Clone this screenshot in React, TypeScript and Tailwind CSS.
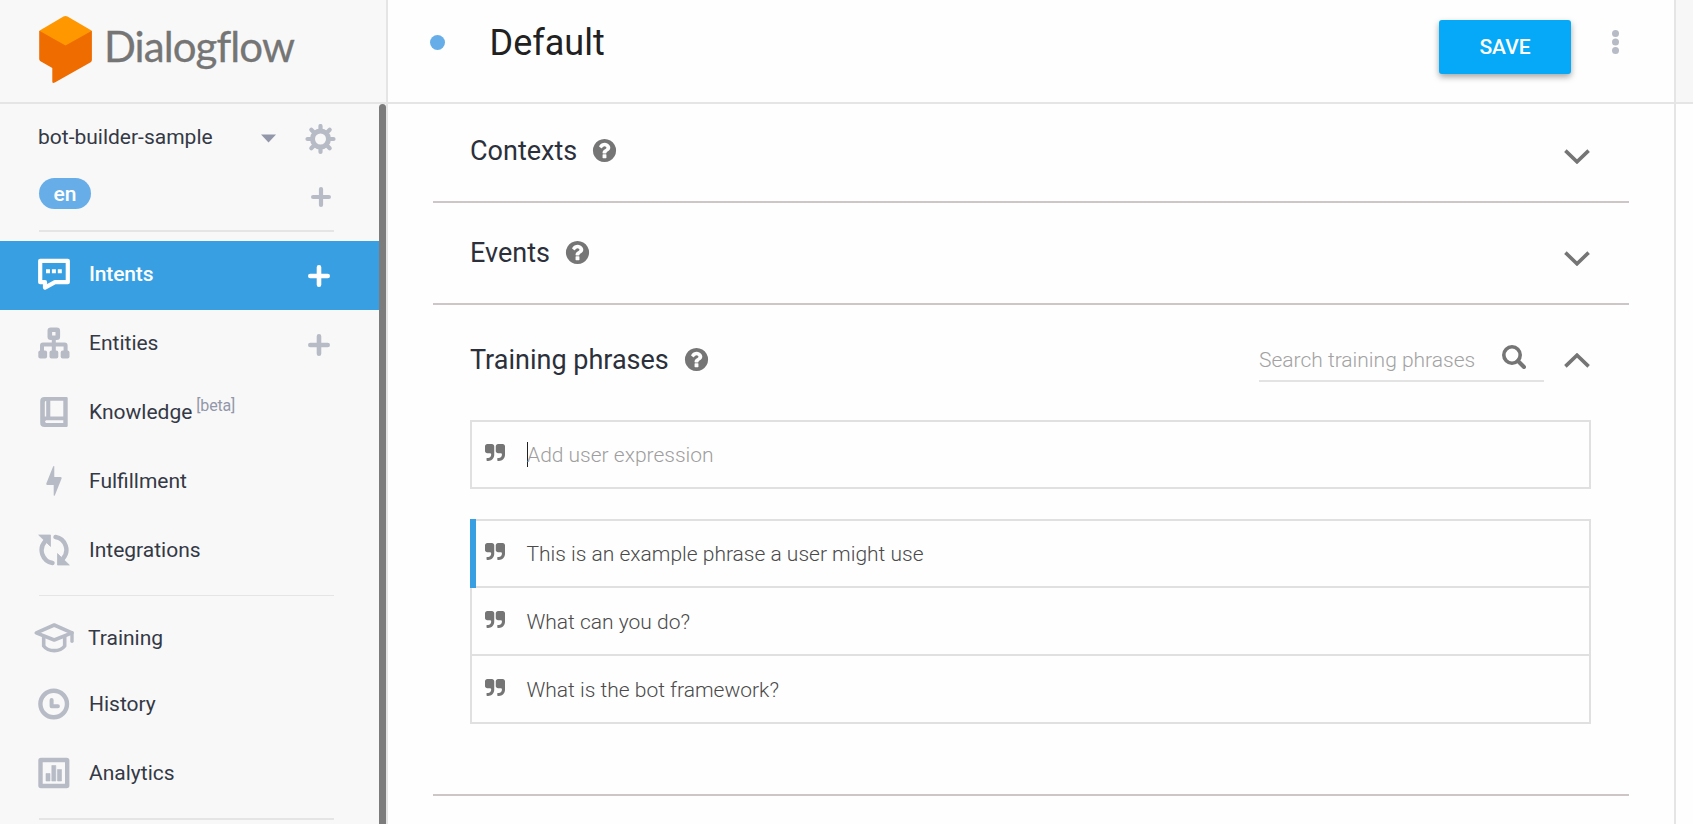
import type { ReactNode } from "react";

function Svg({ w, h, box, className = "", children }: { w: number; h: number; box?: string; className?: string; children: ReactNode }) {
  return (
    <svg width={w} height={h} viewBox={box ?? `0 0 ${w} ${h}`} fill="none" className={`block shrink-0 ${className}`}>
      {children}
    </svg>
  );
}

function HelpIcon() {
  return (
    <Svg w={27} h={27} box="0 0 1792 1792" className="text-[#757575]">
      <path
        fill="currentColor"
        d="M1024 1376v-192q0-14-9-23t-23-9h-192q-14 0-23 9t-9 23v192q0 14 9 23t23 9h192q14 0 23-9t9-23zm256-672q0-88-55.5-163t-138.5-116-170-41q-243 0-371 213-15 24 8 42l132 100q7 6 19 6 16 0 25-12 53-68 86-92 34-24 86-24 48 0 85.5 26t37.5 59q0 38-20 61t-68 45q-63 28-115.5 86.5t-52.5 125.5v36q0 14 9 23t23 9h192q14 0 23-9t9-23q0-19 21.5-49.5t54.5-49.5q32-18 49-28.5t46-35 44.5-48 28-60.5 12.5-81zm384 192q0 209-103 385.5t-279.5 279.5-385.5 103-385.5-103-279.5-279.5-103-385.5 103-385.5 279.5-279.5 385.5-103 385.5 103 279.5 279.5 103 385.5z"
      />
    </Svg>
  );
}

function QuoteIcon() {
  return (
    <Svg w={20} h={17} box="64 128 1664 1408" className="text-[#757575]">
      <path
        fill="currentColor"
        d="M832 320v704q0 104-40.5 198.5t-109.5 163.5-163.5 109.5-198.5 40.5h-64q-26 0-45-19t-19-45v-128q0-26 19-45t45-19h64q106 0 181-75t75-181v-32q0-40-28-68t-68-28h-224q-80 0-136-56t-56-136v-384q0-80 56-136t136-56h384q80 0 136 56t56 136zm896 0v704q0 104-40.5 198.5t-109.5 163.5-163.5 109.5-198.5 40.5h-64q-26 0-45-19t-19-45v-128q0-26 19-45t45-19h64q106 0 181-75t75-181v-32q0-40-28-68t-68-28h-224q-80 0-136-56t-56-136v-384q0-80 56-136t136-56h384q80 0 136 56t56 136z"
      />
    </Svg>
  );
}

function Chevron({ up = false }: { up?: boolean }) {
  return (
    <Svg w={26} h={15} className="text-[#757575]">
      <path d={up ? "M1.4 13.4 13 2.2 24.6 13.4" : "M1.4 1.6 13 12.8 24.6 1.6"} stroke="currentColor" strokeWidth="3.6" />
    </Svg>
  );
}

function Plus({ size }: { size: number }) {
  return (
    <Svg w={size} h={size} box="0 0 22 22">
      <path d="M11 2.300v17.400M2.300 11h17.400" stroke="currentColor" strokeWidth="4.600" strokeLinecap="round" />
    </Svg>
  );
}

function Gear() {
  const angles = [0, 45, 90, 135, 180, 225, 270, 315];
  return (
    <Svg w={31} h={31} className="text-[#b7bbc5]">
      <circle cx="15.5" cy="15" r="8" stroke="currentColor" strokeWidth="5" />
      {angles.map((a) => (
        <path key={a} d="M15.5 5.500V2" stroke="currentColor" strokeWidth="4.200" strokeLinecap="round" transform={`rotate(${a} 15.5 15)`} />
      ))}
    </Svg>
  );
}

const icons: Record<string, ReactNode> = {
  intents: (
    <Svg w={32} h={32}>
      <path d="M2.2 2.8h27.600v21.400H17L7 29.600v-5.400H2.200z" stroke="currentColor" strokeWidth="4.200" strokeLinejoin="round" />
      <path d="M8 11.200h4v4H8zM13.900 11.200h4v4h-4zM19.800 11.200h4v4h-4z" fill="currentColor" />
    </Svg>
  ),
  entities: (
    <Svg w={32} h={32}>
      <rect x="11.8" y="2.8" width="8" height="8" rx="1" stroke="currentColor" strokeWidth="4.600" />
      <path d="M15.8 12v12M4 25v-6.600q0-1 1-1h21.600q1 0 1 1V25" stroke="currentColor" strokeWidth="4" />
      <rect x=".3" y="23.400" width="8.800" height="8" rx="2" fill="currentColor" />
      <rect x="11.500" y="23.400" width="8.800" height="8" rx="2" fill="currentColor" />
      <rect x="22.700" y="23.400" width="8.800" height="8" rx="2" fill="currentColor" />
    </Svg>
  ),
  knowledge: (
    <Svg w={32} h={32}>
      <path
        fill="currentColor"
        fillRule="evenodd"
        d="M6.5 1h22q1.2 0 1.2 1.2v27.6q0 1.2-1.2 1.2h-22Q2.2 31 2.2 26.700V5.300Q2.200 1 6.500 1zM12.300 4.800v15.600H25.300V4.800zM8.200 4.800Q6.800 4.800 6.800 6.300v14.100H8.200V4.800zM8.200 24.200q-2.400 1.400 0 2.800H25.300v-2.800z"
      />
    </Svg>
  ),
  fulfillment: (
    <Svg w={32} h={32}>
      <path d="M16.300 1.200v10.900h6.400q1.300.1.900 1.500L16.900 30.200q-.8 1.200-1.200 0V19.900H9.200q-1.300-.1-.9-1.500L15 1.800q.6-1.100 1.300-.6z" fill="currentColor" />
    </Svg>
  ),
  integrations: (
    <Svg w={32} h={32}>
      <path d="M17.500 3A13 13 0 0 1 25 24.500M14.500 29A13 13 0 0 1 7 7.500" stroke="currentColor" strokeWidth="4.400" strokeLinecap="round" />
      <path d="M.7 1h11.800v11.400zM31.300 31H19.500V19.600z" fill="currentColor" stroke="currentColor" strokeWidth=".8" strokeLinejoin="round" />
    </Svg>
  ),
  training: (
    <Svg w={40} h={32} className="-mx-1">
      <path d="M2.300 11.800 20.200 4 38 11.800 20.200 19z" stroke="currentColor" strokeWidth="3.600" strokeLinejoin="round" />
      <path d="M9.700 15v10q3.500 4.600 10.500 4.600T30.700 25V15" stroke="currentColor" strokeWidth="3.600" strokeLinejoin="round" />
      <path d="M38 11.800v8.500" stroke="currentColor" strokeWidth="3.400" strokeLinecap="round" />
    </Svg>
  ),
  history: (
    <Svg w={32} h={32}>
      <circle cx="15.700" cy="16" r="13.300" stroke="currentColor" strokeWidth="4.400" />
      <path d="M13.600 12v6.300h6.300" stroke="currentColor" strokeWidth="4" strokeLinecap="round" strokeLinejoin="round" />
    </Svg>
  ),
  analytics: (
    <Svg w={32} h={32}>
      <rect x="2.500" y="3" width="26.700" height="26" rx=".5" stroke="currentColor" strokeWidth="4.400" />
      <path d="M8 16.500h4V24H8zM13.800 8.500h4V24h-4zM19.500 12.500h4V24h-4z" fill="currentColor" stroke="currentColor" strokeWidth=".6" strokeLinejoin="round" />
    </Svg>
  ),
};

function NavItem({ icon, label, height, active, plus, beta, textClass = "" }: { icon: string; label: string; height: string; active?: boolean; plus?: boolean; beta?: boolean; textClass?: string }) {
  return (
    <a className={`flex w-[379px] items-center pl-[38px] ${height} ${active ? "bg-[#38a0e2] font-medium tracking-[-0.15px] text-white" : "text-[#343946]"}`}>
      <span className={`pb-[3px] ${active ? "text-white" : "text-[#b7bbc5]"}`}>{icons[icon]}</span>
      <span className={`ml-[19px] flex-1 pb-[3px] text-[21px] leading-6 ${textClass}`}>
        {label}
        {beta && <span className="relative -top-[8px] ml-[4px] text-[16px] leading-none tracking-[-0.2px] text-[#9297aa]">[beta]</span>}
      </span>
      {plus && (
        <span className={`mt-[1px] mr-[49px] ${active ? "text-white" : "text-[#b7bbc5]"}`}>
          <Plus size={22} />
        </span>
      )}
    </a>
  );
}

function Sidebar() {
  return (
    <aside className="flex h-[824px] w-[388px] shrink-0 flex-col border-r-2 border-[#e5e5e5] bg-[#f8f8f8]">
      <div className="flex h-[104px] shrink-0 items-start border-b-2 border-[#e5e5e5] pt-[15px] pl-[39px]">
        <Svg w={53} h={69}>
          <path d="M.2 16H52.900v29q0 1.500-1.200 2.200L15.800 67.600q-2.300 1.200-2.500-.8V53L1.500 46.200Q.2 45.400.2 44z" fill="#ef6c00" />
          <path d="M24.500 1.500q2-1 4 0L52.900 15.800 26.500 30.500.3 15.800z" fill="#ff9800" />
        </Svg>
        <span className="ml-[12px] pt-[6px] font-[Lato] text-[42px] leading-[50px] tracking-[-0.9px] text-[#757575] [-webkit-text-stroke:0.3px_#757575]">Dialogflow</span>
      </div>
      <div className="flex min-h-0 flex-1">
        <div className="w-[379px] shrink-0">
          <div className="flex h-[68px] items-start pt-[20px] pl-[38px] text-[#343946]">
            <span className="w-[223px] pt-px text-[21px] leading-6">bot-builder-sample</span>
            <Svg w={15} h={9} className="mt-[10px]">
              <path d="M0 .5h15L7.500 8.500z" fill="#9297aa" />
            </Svg>
            <span className="ml-[29px]"><Gear /></span>
          </div>
          <div className="ml-[39px] flex h-[60px] w-[295px] items-start justify-between border-b-2 border-[#e5e5e5] pt-[6px]">
            <span className="flex h-[31px] w-[52px] items-center justify-center rounded-full bg-[#67aee9] pt-[2px] text-[21px] font-medium text-white">en</span>
            <span className="mt-[9px] mr-[3px] text-[#b7bbc5]"><Plus size={20} /></span>
          </div>
          <nav className="pt-[9px]">
            <NavItem icon="intents" label="Intents" height="h-[69px]" active plus />
            <NavItem icon="entities" label="Entities" height="h-[69px]" plus />
            <NavItem icon="knowledge" label="Knowledge" height="h-[69px]" beta />
            <NavItem icon="fulfillment" label="Fulfillment" height="h-[69px]" />
            <NavItem icon="integrations" label="Integrations" height="h-[69px]" />
            <div className="mt-[9px] mb-[9px] ml-[39px] h-px w-[295px] bg-[#e5e5e5]" />
            <NavItem icon="training" label="Training" height="h-[66px]" textClass="pt-[2px] [text-indent:-1px]" />
            <NavItem icon="history" label="History" height="h-[69px]" />
            <NavItem icon="analytics" label="Analytics" height="h-[69px]" />
            <div className="mt-[9px] ml-[39px] h-[2px] w-[295px] bg-[#e5e5e5]" />
          </nav>
        </div>
        <div className="w-[7px] rounded-t-full bg-[#7c7c7c]" />
      </div>
    </aside>
  );
}

function Section({ title }: { title: string }) {
  return (
    <section className="flex h-[102px] items-start justify-between border-b-2 border-[#cec6c6] pr-[39px] pl-[37px]">
      <h2 className="flex items-start gap-[14px] pt-[34px] text-[27px] leading-[32px] text-[#2b303b]">
        {title}
        <span className="pt-[2px]"><HelpIcon /></span>
      </h2>
      <span className="pt-[48px]"><Chevron /></span>
    </section>
  );
}

function Phrase({ text, first }: { text: string; first?: boolean }) {
  return (
    <li className={`flex items-start border-b-2 border-[#e0e0e0] ${first ? "relative h-[67px]" : "h-[68px] pt-px"}`}>
      {first && <span className="absolute -top-[2px] -left-[2px] h-[69px] w-[6px] bg-[#38a0e2]" />}
      <span className="ml-[13px] pt-[22px]"><QuoteIcon /></span>
      <span className="ml-[21.5px] pt-[21px] text-[21px] leading-6 font-light text-[#4a4a4a]">{text}</span>
    </li>
  );
}

export default function App() {
  return (
    <div className="flex h-[824px] w-[1693px] overflow-hidden bg-[#fefefe] font-[Roboto,sans-serif] whitespace-nowrap">
      <Sidebar />
      <main className="flex w-[1288px] shrink-0 flex-col border-r-2 border-[#e5e5e5]">
        <header className="flex h-[104px] shrink-0 items-start border-b-2 border-[#e5e5e5]">
          <span className="mt-[35px] ml-[42px] size-[15px] rounded-full bg-[#67aee9]" />
          <h1 className="mt-[22px] ml-[44.5px] flex-1 text-[36px] leading-[42px] text-[#212121]">Default</h1>
          <button className="mt-[20px] flex h-[54px] w-[132px] items-center justify-center rounded-[3px] bg-[#05a9f7] pt-[2px] text-[21px] font-medium text-white shadow-[0_3px_6px_rgba(0,0,0,0.35)]">SAVE</button>
          <Svg w={7} h={26} className="mt-[29px] mr-[55px] ml-[41px]">
            <circle cx="3.500" cy="4.500" r="3.500" fill="#b7bbc5" />
            <circle cx="3.500" cy="13" r="3.500" fill="#b7bbc5" />
            <circle cx="3.500" cy="21.500" r="3.500" fill="#b7bbc5" />
          </Svg>
        </header>
        <div className="-mt-[3px] ml-[45px] w-[1196px]">
          <Section title="Contexts" />
          <Section title="Events" />
          <section className="h-[491px] border-b-2 border-[#cec6c6] pr-[38px] pl-[37px]">
            <div className="flex h-[115px] items-start">
              <h2 className="flex flex-1 items-start gap-[14px] pt-[39px] text-[27px] leading-[32px] text-[#2b303b]">
                Training phrases
                <span className="pt-[2px]"><HelpIcon /></span>
              </h2>
              <div className="mt-[32px] flex h-[45px] w-[285px] items-start justify-between border-b-2 border-[#e3e3e3] pr-[18px]">
                <span className="pt-[11px] text-[21px] leading-6 font-light text-[#a2a2a2]">Search training phrases</span>
                <Svg w={24} h={24} className="mt-[8px] text-[#757575]">
                  <circle cx="10" cy="10" r="8.200" stroke="currentColor" strokeWidth="3.600" />
                  <path d="m16 16 6 6" stroke="currentColor" strokeWidth="4" strokeLinecap="round" />
                </Svg>
              </div>
              <span className="mr-[1px] ml-[20px] pt-[48px]"><Chevron up /></span>
            </div>
            <div className="flex h-[69px] items-start border-2 border-[#e0e0e0]">
              <span className="ml-[13px] pt-[22px]"><QuoteIcon /></span>
              <span className="mt-[20px] ml-[22px] h-[25px] w-px bg-[#222]" />
              <span className="-ml-px pt-[21px] text-[21px] leading-6 font-light text-[#9e9e9e]">Add user expression</span>
            </div>
            <ul className="mt-[30px] border-x-2 border-t-2 border-[#e0e0e0]">
              <Phrase first text="This is an example phrase a user might use" />
              <Phrase text="What can you do?" />
              <Phrase text="What is the bot framework?" />
            </ul>
          </section>
        </div>
      </main>
      <div className="flex-1">
        <div className="h-[104px] border-b-2 border-[#e5e5e5] bg-[#f7f7f7]" />
      </div>
    </div>
  );
}
